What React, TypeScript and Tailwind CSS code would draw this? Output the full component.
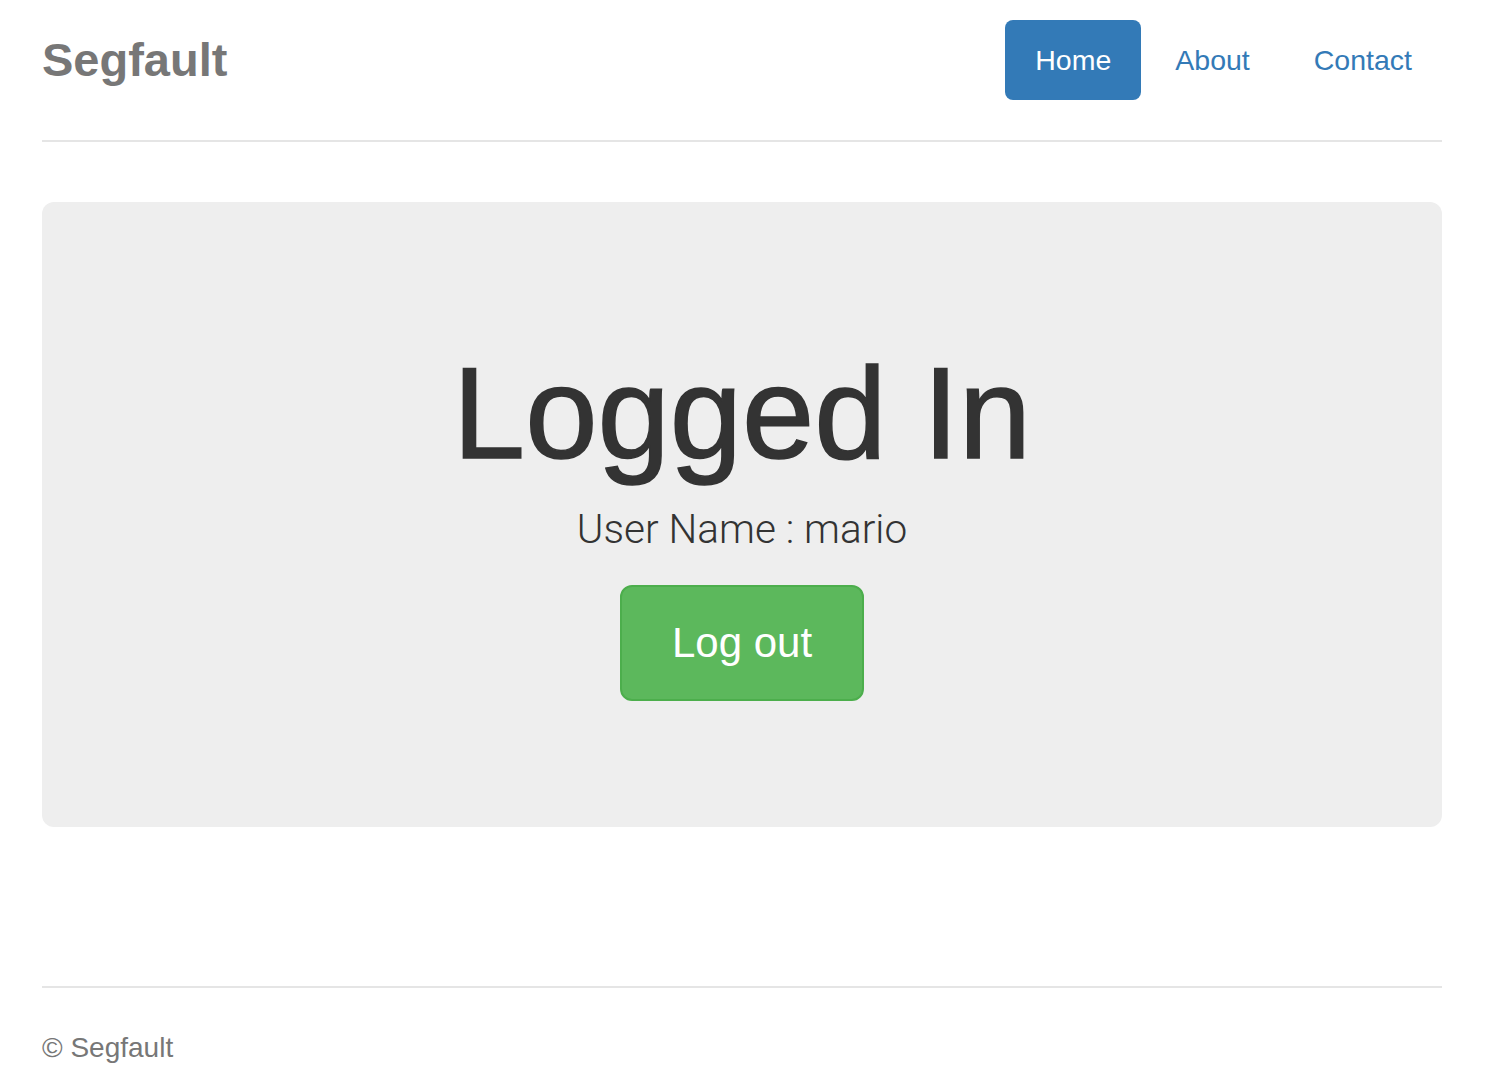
export default function App() {
  return (
    <div className="min-h-screen bg-white pl-[42px] pr-[46px] pt-[20px] font-['Liberation_Sans',Arial,sans-serif] text-[#333]">
      {/* Header */}
      <div className="flex items-center justify-between border-b-2 border-[#e5e5e5] pb-[40px]">
        <h3 className="text-[47px] font-bold leading-[80px] text-[#777]">Segfault</h3>
        <nav className="flex gap-[4px] text-[28.5px]">
          <a className="rounded-[8px] bg-[#337ab7] px-[30px] leading-[80px] text-white">Home</a>
          <a className="px-[30px] leading-[80px] text-[#337ab7]">About</a>
          <a className="px-[30px] leading-[80px] text-[#337ab7]">Contact</a>
        </nav>
      </div>

      {/* Jumbotron */}
      <div className="mt-[60px] flex flex-col items-center rounded-[12px] bg-[#eee] pt-[146px] pb-[126px]">
        <h1 className="text-[130px] leading-none font-normal text-[#333] [-webkit-text-stroke:1.5px_#333]">Logged In</h1>
        <p className="mt-[23px] font-['Roboto',sans-serif] text-[40.5px] font-light leading-[56px] text-[#333]">
          User Name : mario
        </p>
        <button className="mt-[28px] rounded-[12px] border-2 border-[#4cae4c] bg-[#5cb85c] px-[50px] py-[28px] text-[42px] leading-[56px] text-white">
          Log out
        </button>
      </div>

      {/* Footer */}
      <footer className="mt-[159px] border-t-2 border-[#e5e5e5] pt-[40px] pb-[20px]">
        <p className="text-[28px] leading-[40px] text-[#777]">© Segfault</p>
      </footer>
    </div>
  );
}
